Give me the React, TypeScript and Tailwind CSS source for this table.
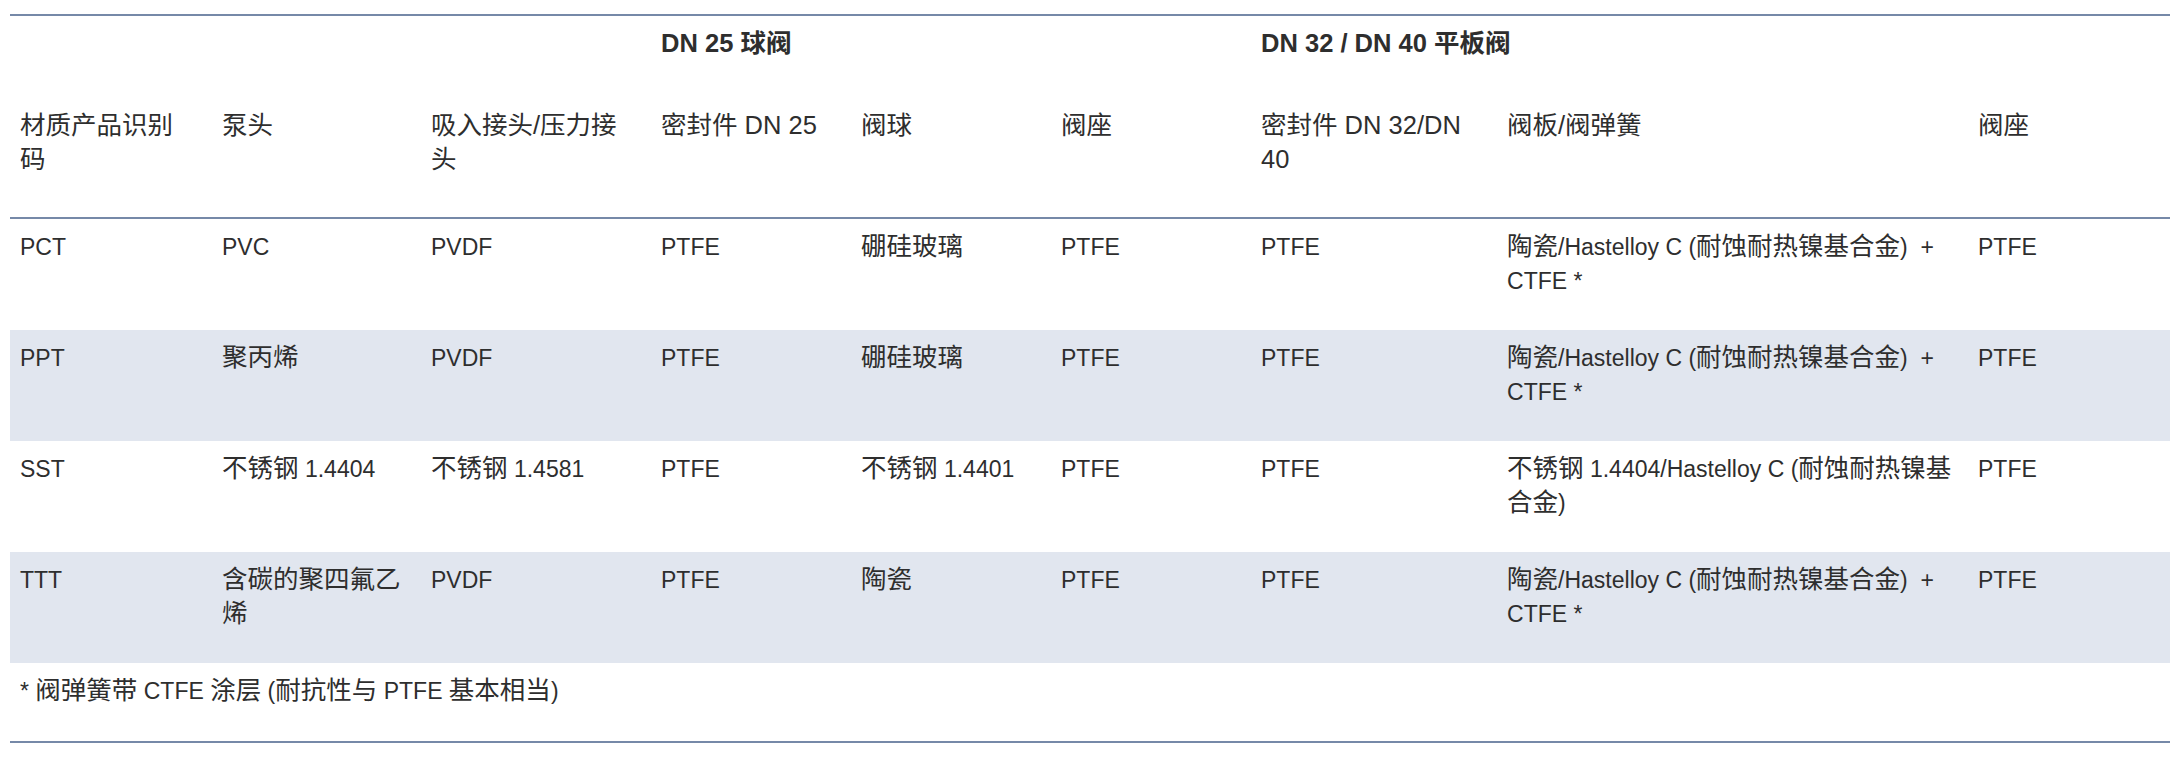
import React from 'react';

const header = [
    '材质产品识别\n码',
    '泵头',
    '吸入接头/压力接\n头',
    '密封件 DN 25',
    '阀球',
    '阀座',
    '密封件 DN 32/DN\n40',
    '阀板/阀弹簧',
    '阀座',
];

const plate = '陶瓷/Hastelloy C (耐蚀耐热镍基合金)  +\nCTFE *';

const rows = [
    ['PCT', 'PVC', 'PVDF', 'PTFE', '硼硅玻璃', 'PTFE', 'PTFE', plate, 'PTFE'],
    ['PPT', '聚丙烯', 'PVDF', 'PTFE', '硼硅玻璃', 'PTFE', 'PTFE', plate, 'PTFE'],
    ['SST', '不锈钢 1.4404', '不锈钢 1.4581', 'PTFE', '不锈钢 1.4401', 'PTFE', 'PTFE', '不锈钢 1.4404/Hastelloy C (耐蚀耐热镍基\n合金)', 'PTFE'],
    ['TTT', '含碳的聚四氟乙\n烯', 'PVDF', 'PTFE', '陶瓷', 'PTFE', 'PTFE', plate, 'PTFE'],
];

const widths = [202, 209, 230, 200, 200, 200, 246, 471, 202];

// CJK glyphs sit a little larger than the latin text in the body cells
function Txt({ s }: { s: string }) {
    const parts = s.split(/([\u3000-\u9fff\uff00-\uffef]+)/);
    return (
        <>
            {parts.map((p, i) =>
                i % 2 ? (
                    <span key={i} className="text-[25.5px] leading-none">{p}</span>
                ) : (
                    <React.Fragment key={i}>{p}</React.Fragment>
                )
            )}
        </>
    );
}

export default function App() {
    return (
        <div className="bg-white w-[2181px] h-[761px] pt-[14px] font-['Liberation_Sans','Noto_Sans_CJK_SC',sans-serif] text-[23px] leading-[34px] text-[#2e2e2e]">
            <table className="ml-[10px] w-[2160px] table-fixed border-separate border-spacing-0 text-left">
                <colgroup>
                    {widths.map((w, i) => (
                        <col key={i} style={{ width: w }} />
                    ))}
                </colgroup>
                <thead className="text-[25.5px]">
                    <tr>
                        <th colSpan={3} className="border-t-2 border-[#7689a8] px-[10px] pt-[10px] pb-[38px]"></th>
                        <th colSpan={3} className="border-t-2 border-[#7689a8] px-[10px] pt-[10px] pb-[38px] font-bold align-top whitespace-pre">
                            DN 25 球阀
                        </th>
                        <th colSpan={3} className="border-t-2 border-[#7689a8] px-[10px] pt-[10px] pb-[38px] font-bold align-top whitespace-pre">
                            DN 32 / DN 40 平板阀
                        </th>
                    </tr>
                    <tr>
                        {header.map((h, i) => (
                            <th key={i} className="border-b-2 border-[#7689a8] px-[10px] pt-[10px] pb-[41px] font-normal align-top whitespace-pre">
                                {h}
                            </th>
                        ))}
                    </tr>
                </thead>
                <tbody>
                    {rows.map((r, ri) => (
                        <tr key={ri} className={ri % 2 === 1 ? 'bg-[#e1e6ef]' : ''}>
                            {r.map((c, ci) => (
                                <td key={ci} className="px-[10px] pt-[11px] pb-[32px] align-top whitespace-pre">
                                    <Txt s={c} />
                                </td>
                            ))}
                        </tr>
                    ))}
                    <tr>
                        <td colSpan={9} className="border-b-2 border-[#7689a8] px-[10px] pt-[11px] pb-[33px] align-top whitespace-pre">
                            <Txt s="* 阀弹簧带 CTFE 涂层 (耐抗性与 PTFE 基本相当)" />
                        </td>
                    </tr>
                </tbody>
            </table>
        </div>
    );
}
